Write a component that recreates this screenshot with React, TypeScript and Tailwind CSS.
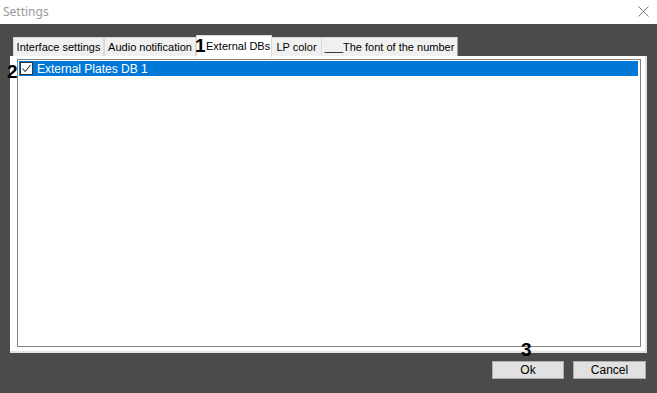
import React from "react";

const tabs = [
  { label: "Interface settings", w: 91 },
  { label: "Audio notification", w: 92 },
];

export default function App() {
  return (
    <div
      className="relative w-[657px] h-[393px] bg-[#4b4b4b] flex flex-col overflow-hidden"
      style={{ fontFamily: '"Liberation Sans", Arial, sans-serif' }}
    >
      {/* title bar */}
      <div className="h-6 bg-white flex items-center justify-between pl-[3px] pr-[8px] shrink-0">
        <span
          className="text-[12px] text-[#9a9a9a] leading-none"
          style={{ fontFamily: '"Noto Sans", "Open Sans", sans-serif' }}
        >
          Settings
        </span>
        <svg width="11" height="11" viewBox="0 0 11 11" className="mt-[-2px]">
          <path d="M0.5 0.5 L10.5 10.5 M10.5 0.5 L0.5 10.5" stroke="#7a7a7a" strokeWidth="1" />
        </svg>
      </div>

      <div className="flex flex-col pl-[10px] pt-[11px]">
        {/* tab strip */}
        <div className="flex items-end h-[21px] pl-[3px] text-[11px] text-black">
          {tabs.map((t) => (
            <div
              key={t.label}
              className="h-[19px] bg-[#f0f0f0] border border-b-0 border-[#d9d9d9] flex items-center justify-center"
              style={{ width: t.w }}
            >
              {t.label}
            </div>
          ))}
          <div className="h-[22px] w-[76px] bg-white border border-b-0 border-[#d9d9d9] flex items-center pl-[9px] mb-[-1px] relative z-10 whitespace-nowrap">
            External DBs
          </div>
          <div className="h-[19px] w-[50px] bg-[#f0f0f0] border border-b-0 border-l-0 border-[#d9d9d9] flex items-center justify-center">
            LP color
          </div>
          <div className="h-[19px] w-[136px] bg-[#f0f0f0] border border-b-0 border-l-0 border-r-[#a0a0a0] border-[#d9d9d9] flex items-center justify-center">
            ___The font of the number
          </div>
        </div>

        {/* panel */}
        <div className="w-[637px] h-[297px] bg-white border-r-2 border-b-2 border-[#e3e3e3] pl-[7px] pt-[3px] pr-[4px] pb-[4px]">
          <div className="w-full h-full border border-[#828282] p-[1px]">
            <div className="h-[15px] bg-[#0078d7] flex items-center pl-[1px] mr-[1px]">
              <div className="w-[13px] h-[13px] bg-white border border-[#333] flex items-center justify-center">
                <svg width="11" height="11" viewBox="0 0 11 11">
                  <path d="M1.5 5.5 L4.2 8.5 L9.5 2" fill="none" stroke="#333" strokeWidth="1.1" />
                </svg>
              </div>
              <span className="ml-[4px] text-[12px] text-white leading-none">External Plates DB 1</span>
            </div>
          </div>
        </div>

        {/* buttons */}
        <div className="flex justify-end gap-[9px] mt-[8px] pr-[11px] text-[12px]">
          <button className="w-[72px] h-[18px] bg-[#e1e1e1] border border-[#adadad] text-black leading-none">
            Ok
          </button>
          <button className="w-[73px] h-[18px] bg-[#e1e1e1] border border-[#adadad] text-black leading-none">
            Cancel
          </button>
        </div>
      </div>

      {/* annotations */}
      <span className="absolute left-[195px] top-[36px] text-[19px] font-bold text-black leading-none z-20">1</span>
      <span className="absolute left-[7px] top-[62px] text-[19px] font-bold text-black leading-none z-20">2</span>
      <span className="absolute left-[521px] top-[340px] text-[19px] font-bold text-black leading-none z-20">3</span>
    </div>
  );
}
